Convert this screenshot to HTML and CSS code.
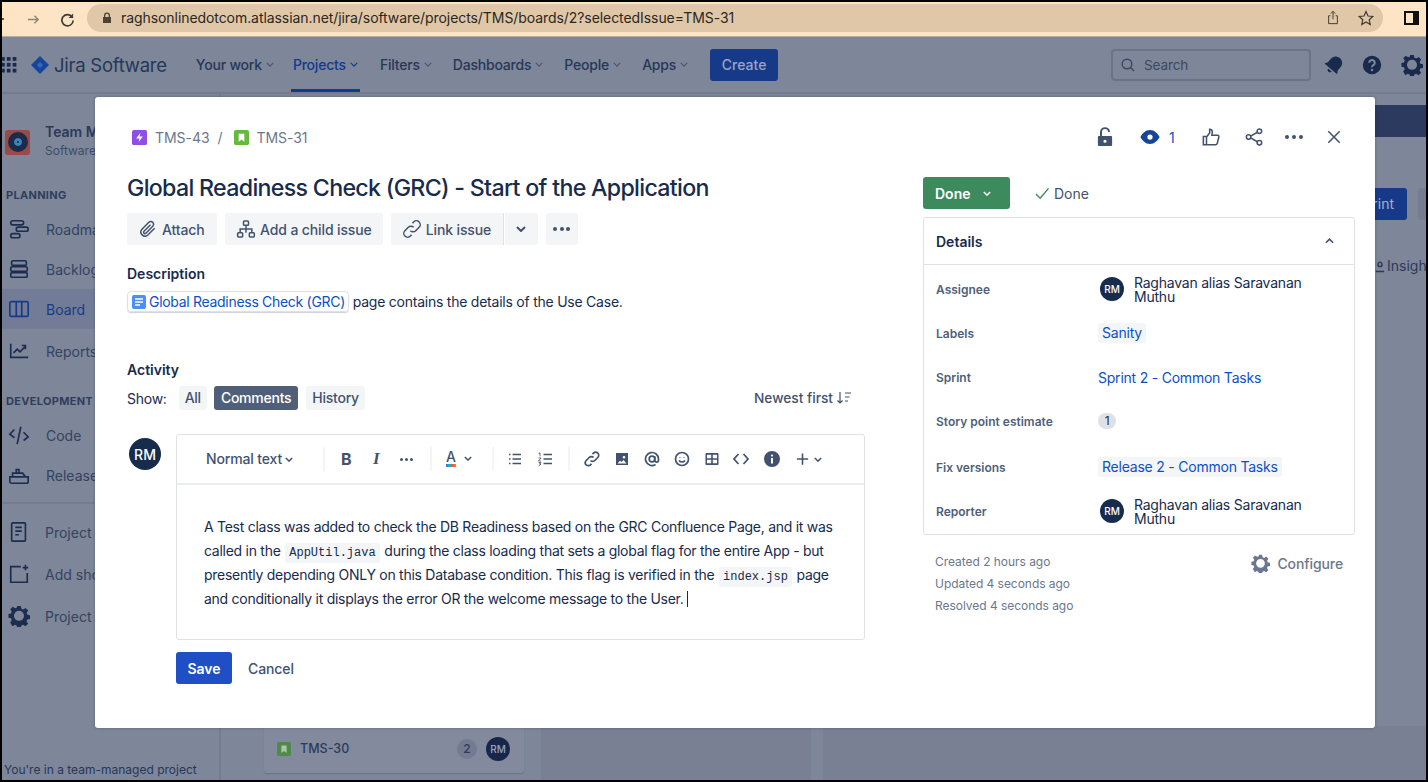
FILE: index.html
```html
<!DOCTYPE html>
<html lang="en">
<head>
<meta charset="utf-8">
<title>TMS-31</title>
<link rel="stylesheet" href="styles.css">
</head>
<body>
<div class="frame">
  <header class="chrome">
    <span class="back"></span>
    <svg class="ci fwd" viewBox="0 0 16 16"><path d="M2 8h11M9 4l4 4-4 4"/></svg>
    <svg class="ci reload" viewBox="0 0 16 16"><path d="M13 5.500A6 6 0 1 0 14 9"/><path class="fill" d="M14 1.500v5h-5z"/></svg>
    <div class="omni">
      <svg class="lock" viewBox="0 0 10 12"><path d="M2 5V3.500a3 3 0 0 1 6 0V5h1v6H1V5zm1.300 0h3.400V3.500a1.700 1.700 0 0 0-3.400 0z"/></svg>
      <span class="url">raghsonlinedotcom.atlassian.net/jira/software/projects/TMS/boards/2?selectedIssue=TMS-31</span>
      <svg class="ci share" viewBox="0 0 16 18"><path d="M5 7H3v9h10V7h-2M8 11V2M5.500 4.500 8 2l2.500 2.500"/></svg>
      <svg class="ci star" viewBox="0 0 16 16"><path d="m8 1.500 2 4.500 4.800.5-3.600 3.200 1 4.800L8 12l-4.200 2.500 1-4.800L1.200 6.500 6 6z"/></svg>
    </div>
    <span class="sidepanel"></span>
  </header>

  <nav class="topnav">
    <svg class="apps" viewBox="0 0 16 16"><g><rect x="0" y="1" width="3.500" height="3.500"/><rect x="5.500" y="1" width="3.500" height="3.500"/><rect x="11" y="1" width="3.500" height="3.500"/><rect x="0" y="6.500" width="3.500" height="3.500"/><rect x="5.500" y="6.500" width="3.500" height="3.500"/><rect x="11" y="6.500" width="3.500" height="3.500"/><rect x="0" y="12" width="3.500" height="3.500"/><rect x="5.500" y="12" width="3.500" height="3.500"/><rect x="11" y="12" width="3.500" height="3.500"/></g></svg>
    <svg class="jira-logo" viewBox="0 0 18 18"><path d="M9 0l9 9-9 9-9-9z"/><path class="hole" d="M9 6l3 3-3 3-3-3z"/></svg>
    <span class="brand">Jira Software</span>
    <ul class="menu">
      <li>Your work <svg class="chev" viewBox="0 0 10 6"><path d="M1 1l4 4 4-4"/></svg></li>
      <li class="active">Projects <svg class="chev" viewBox="0 0 10 6"><path d="M1 1l4 4 4-4"/></svg></li>
      <li>Filters <svg class="chev" viewBox="0 0 10 6"><path d="M1 1l4 4 4-4"/></svg></li>
      <li>Dashboards <svg class="chev" viewBox="0 0 10 6"><path d="M1 1l4 4 4-4"/></svg></li>
      <li>People <svg class="chev" viewBox="0 0 10 6"><path d="M1 1l4 4 4-4"/></svg></li>
      <li>Apps <svg class="chev" viewBox="0 0 10 6"><path d="M1 1l4 4 4-4"/></svg></li>
    </ul>
    <span class="create">Create</span>
    <div class="nav-right">
      <div class="search">
        <svg class="ni" viewBox="0 0 16 16"><circle cx="7" cy="7" r="4.800"/><path d="M10.500 10.500 14 14"/></svg>
        <span>Search</span>
      </div>
      <svg class="nav-ico bell" viewBox="0 0 24 24"><g transform="rotate(40 12 12)"><path d="M12 2a7 7 0 0 0-7 7v5l-2 3.500h18L19 14V9a7 7 0 0 0-7-7z"/><path d="M9.500 19a2.500 2.500 0 0 0 5 0z"/></g></svg>
      <svg class="nav-ico help" viewBox="0 0 24 24"><circle cx="12" cy="12" r="10"/><path class="q" d="M9 9.500a3 3 0 1 1 4.500 2.600c-1 .6-1.500 1.100-1.500 2.400"/><circle class="qd" cx="12" cy="17.500" r="1.300"/></svg>
      <svg class="nav-ico gear" viewBox="0 0 24 24"><use href="#gear-shape"/></svg>
    </div>
  </nav>

  <main class="behind">
    <aside class="side">
      <div class="project">
        <span class="proj-ava"><i></i></span>
        <div><b>Team Management</b><small>Software project</small></div>
      </div>
      <h6>PLANNING</h6>
      <a class="side-item"><svg viewBox="0 0 24 24"><rect x="3" y="3" width="14" height="4.500" rx="2.200"/><rect x="9" y="10" width="13" height="4.500" rx="2.200"/><rect x="3" y="17" width="10" height="4.500" rx="2.200"/></svg>Roadmap</a>
      <a class="side-item"><svg viewBox="0 0 24 24"><rect x="4" y="3" width="16" height="5" rx="1.500"/><rect x="3" y="9.500" width="18" height="5" rx="1.500"/><rect x="3" y="16" width="18" height="5" rx="1.500"/></svg>Backlog</a>
      <a class="side-item current"><svg viewBox="0 0 24 24"><rect x="2" y="4" width="20" height="16" rx="1.500"/><path d="M9 4v16M15 4v16"/></svg>Board</a>
      <a class="side-item"><svg viewBox="0 0 24 24"><path d="M3 4v15h19M6 14l4-4 3 3 6-6M15 6h4v4"/></svg>Reports</a>
      <h6 class="dev">DEVELOPMENT</h6>
      <a class="side-item"><svg viewBox="0 0 24 24"><path d="M7 6l-5 5 5 4M17 9l5 5-5 4M14 3l-4 19"/></svg>Code</a>
      <a class="side-item"><svg viewBox="0 0 24 24"><path d="M2 14h20v5a2 2 0 0 1-2 2H4a2 2 0 0 1-2-2zM5 14v-4h11l3 4M9 10V6h3v4"/></svg>Releases</a>
      <hr>
      <a class="side-item low"><svg viewBox="0 0 24 24"><rect x="4" y="2" width="15" height="20" rx="1"/><path d="M8 7h7M8 11h7M8 15h4"/></svg>Project pages</a>
      <a class="side-item low"><svg viewBox="0 0 24 24"><path d="M14 4H3v17h18V11M19 2v6M16 5h6"/></svg>Add shortcut</a>
      <a class="side-item low"><svg class="solid" viewBox="0 0 24 24"><use href="#gear-shape"/></svg>Project settings</a>
      <p class="team-note">You're in a team-managed project</p>
    </aside>
    <section class="board">
      <div class="sprint-strip"></div>
      <div class="board-actions">
        <span class="complete">Complete sprint</span>
        <span class="board-more"></span>
      </div>
      <div class="insights"><svg viewBox="0 0 12 14"><path d="M1 13h10M6 2a2.500 2.500 0 1 1 0 5 2.500 2.500 0 0 1 0-5z"/></svg>Insights</div>
      <div class="columns">
        <div class="col col-one">
          <div class="card">
            <svg class="story-mini" viewBox="0 0 16 16"><rect width="16" height="16" rx="2" fill="#4f8a4a"/><path fill="#a9c6a8" d="M5 4h6v8.500l-3-2.300-3 2.300z"/></svg>
            <span class="card-key">TMS-30</span>
            <span class="card-pts">2</span><span class="card-ava">RM</span>
          </div>
        </div>
        <div class="col col-two"></div>
        <div class="col col-gap"></div>
        <div class="col col-two rest"></div>
      </div>
    </section>
  </main>

  <div class="modal">
    <div class="col-left">
      <div class="crumbs">
        <svg class="type" viewBox="0 0 16 16"><rect width="16" height="16" rx="2" fill="#904ee2"/><path fill="#fff" d="M9 3 4.500 9H8l-1 4 4.500-6H8z"/></svg>
        <span>TMS-43</span><span class="slash">/</span>
        <svg class="type" viewBox="0 0 16 16"><rect width="16" height="16" rx="2" fill="#63ba3c"/><path fill="#fff" d="M5 4h6v8.500l-3-2.300-3 2.300z"/></svg>
        <span>TMS-31</span>
      </div>
      <h1>Global Readiness Check (GRC) - Start of the Application</h1>
      <div class="actions">
        <span class="btn attach"><svg class="bi" viewBox="0 0 24 24"><path d="M20 11l-8.500 8.500a5 5 0 0 1-7-7L13 4a3.300 3.300 0 0 1 4.700 4.700L9.500 17a1.600 1.600 0 0 1-2.300-2.300L15 7"/></svg>Attach</span>
        <span class="btn"><svg class="bi" viewBox="0 0 24 24"><rect x="9" y="2.500" width="6" height="5" rx="1"/><rect x="2" y="16.500" width="6" height="5" rx="1"/><rect x="16" y="16.500" width="6" height="5" rx="1"/><path d="M12 7.500V12M5 16.500V12h14v4.500M12 12v4.500"/></svg>Add a child issue</span>
        <span class="btn-group">
          <span class="btn joined"><svg class="bi" viewBox="0 0 24 24"><path d="M10 14a4.500 4.500 0 0 0 6.500 0l4-4a4.500 4.500 0 0 0-6.500-6.500l-1.500 1.500M14 10a4.500 4.500 0 0 0-6.500 0l-4 4a4.500 4.500 0 0 0 6.500 6.500l1.500-1.500"/></svg>Link issue</span>
          <span class="btn joined-end"><svg class="chev-b" viewBox="0 0 10 6"><path d="M1 1l4 4 4-4"/></svg></span>
        </span>
        <span class="btn more"><i></i><i></i><i></i></span>
      </div>
      <h2>Description</h2>
      <p class="desc"><a class="smart"><svg viewBox="0 0 16 16"><rect width="14" height="14" x="1" y="1" rx="2" fill="#4c8efa"/><path stroke="#fff" stroke-width="1.500" d="M4 5h8M4 8h8M4 11h5"/></svg>Global Readiness Check (GRC)</a> page contains the details of the Use Case.</p>
      <h2 class="act-title">Activity</h2>
      <div class="filters">
        <span class="show">Show:</span>
        <span class="pill">All</span>
        <span class="pill on">Comments</span>
        <span class="pill">History</span>
        <span class="newest">Newest first <svg viewBox="0 0 16 16"><path d="M4 2v11M1.500 10.500 4 13l2.500-2.500M9 3h6M9 7h4.500M9 11h3"/></svg></span>
      </div>
      <div class="comment">
        <span class="avatar big">RM</span>
        <div class="comment-body">
          <div class="editor">
            <div class="toolbar">
              <span class="style-pick">Normal text <svg class="chev-t" viewBox="0 0 10 6"><path d="M1 1l4 4 4-4"/></svg></span>
              <span class="sep s1"></span>
              <b class="tb-b">B</b>
              <i class="tb-i">I</i>
              <span class="tb-more"><i></i><i></i><i></i></span>
              <span class="sep s2"></span>
              <span class="tb-color"><span>A</span><svg class="chev-t" viewBox="0 0 10 6"><path d="M1 1l4 4 4-4"/></svg></span>
              <span class="sep s3"></span>
              <svg class="ti" viewBox="0 0 16 16"><path d="M5.500 3.500H14M5.500 8H14M5.500 12.500H14M2 3.500h1.500M2 8h1.500M2 12.500h1.500"/></svg>
              <svg class="ti t2" viewBox="0 0 16 16"><path d="M6.500 3.500H15M6.500 8H15M6.500 12.500H15"/><path class="thin" d="M1.500 2.500 3 1.800v3.500M1.500 7h2.500L1.500 10h2.500M1.500 11.500h2.500L2.500 13h1.500L1.500 15"/></svg>
              <span class="sep s4"></span>
              <svg class="ti t3" viewBox="0 0 16 16"><path d="M6.500 9.500a3 3 0 0 0 4.300 0l3-3A3 3 0 0 0 9.500 2.200L8.500 3.200M9.500 6.500a3 3 0 0 0-4.300 0l-3 3a3 3 0 0 0 4.300 4.300l1-1"/></svg>
              <svg class="ti t4" viewBox="0 0 16 16"><path class="tf" d="M2 2h12v12H2zm8 3a1.300 1.300 0 1 0 0 2.600A1.300 1.300 0 0 0 10 5zM3.500 12.500h9l-3-3.500-2 2-1.500-1.300z"/></svg>
              <svg class="ti t5" viewBox="0 0 16 16"><circle cx="8" cy="8" r="2.800"/><path d="M10.800 5.200v4a1.800 1.800 0 0 0 3.700 0V8A6.500 6.500 0 1 0 11.500 13.500"/></svg>
              <svg class="ti t6" viewBox="0 0 16 16"><circle cx="8" cy="8" r="6.500"/><path d="M5 9.500c1.500 2 4.500 2 6 0"/><path d="M5.800 6v.6M10.200 6v.6"/></svg>
              <svg class="ti t7" viewBox="0 0 16 16"><path class="tf" d="M2.500 2h11a1 1 0 0 1 1 1v10a1 1 0 0 1-1 1h-11a1 1 0 0 1-1-1V3a1 1 0 0 1 1-1zm.5 1.700v3.500h4.200V3.700zm5.800 0v3.500H13V3.700zM3 8.800v3.500h4.200V8.800zm5.800 0v3.500H13V8.800z"/></svg>
              <svg class="ti t8" viewBox="0 0 16 16"><path d="M5.500 3 1 8l4.500 5M10.500 3 15 8l-4.500 5"/></svg>
              <svg class="ti t9" viewBox="0 0 16 16"><path class="tf" d="M8 0a8 8 0 1 1 0 16A8 8 0 0 1 8 0zM7 7v5.500h2V7zm1-3.500a1.100 1.100 0 1 0 0 2.200 1.100 1.100 0 0 0 0-2.200z"/></svg>
              <span class="tb-plus"><svg class="ti" viewBox="0 0 16 16"><path d="M8 2v12M2 8h12"/></svg><svg class="chev-t" viewBox="0 0 10 6"><path d="M1 1l4 4 4-4"/></svg></span>
            </div>
            <div class="editor-text">
              <p>A Test class was added to check the DB Readiness based on the GRC Confluence Page, and it was</p>
              <p>called in the <code>AppUtil.java</code> during the class loading that sets a global flag for the entire App - but</p>
              <p>presently depending ONLY on this Database condition. This flag is verified in the <code>index.jsp</code> page</p>
              <p>and conditionally it displays the error OR the welcome message to the User.<span class="caret"></span></p>
            </div>
          </div>
          <div class="form-btns">
            <span class="save">Save</span>
            <span class="cancel">Cancel</span>
          </div>
        </div>
      </div>
    </div>

    <div class="col-right">
      <div class="top-icons">
        <svg class="ri lock-open" viewBox="0 0 18 22"><path class="tf" d="M2 10h14a1 1 0 0 1 1 1v9a1 1 0 0 1-1 1H2a1 1 0 0 1-1-1v-9a1 1 0 0 1 1-1zm7 4a1.800 1.800 0 1 0 0 3.600A1.800 1.800 0 0 0 9 14z"/><path d="M4.500 10V5.500a4.500 4.500 0 0 1 9 0"/></svg>
        <span class="watch"><svg viewBox="0 0 22 16"><path class="eye" fill-rule="evenodd" d="M11 0c5 0 9 4 11 8-2 4-6 8-11 8S2 12 0 8c2-4 6-8 11-8zm0 5a3 3 0 1 0 0 6 3 3 0 0 0 0-6z"/></svg><span>1</span></span>
        <svg class="ri thumb" viewBox="0 0 20 20"><path d="M1.500 9.500h3.500v9H1.500zM5 10l3.500-4.500V1.500c2 0 3 1.500 3 3.500l-.5 3h6.500c1 0 1.500 1 1.200 2l-1.700 7c-.3 1-1 1.500-2 1.500H5"/></svg>
        <svg class="ri share2" viewBox="0 0 20 20"><circle cx="4" cy="10" r="2.500"/><circle cx="16" cy="3.500" r="2.500"/><circle cx="16" cy="16.500" r="2.500"/><path d="M6.200 9l7.600-4.300M6.200 11l7.600 4.300"/></svg>
        <span class="dots"><i></i><i></i><i></i></span>
        <svg class="ri closex" viewBox="0 0 16 16"><path d="M1.500 1.500l13 13M14.500 1.500l-13 13"/></svg>
      </div>
      <div class="status-row">
        <span class="status">Done <svg viewBox="0 0 10 6"><path d="M1 1l4 4 4-4"/></svg></span>
        <span class="resolution"><svg viewBox="0 0 16 14"><path d="M1.500 7.500 6 12 15 1.500"/></svg>Done</span>
      </div>
      <div class="details">
        <div class="details-head"><span>Details</span><svg viewBox="0 0 10 6"><path d="M1 5l4-4 4 4"/></svg></div>
        <div class="rows">
          <div class="row"><label>Assignee</label><div class="val person"><span class="avatar">RM</span><span class="name">Raghavan alias Saravanan Muthu</span></div></div>
          <div class="row"><label>Labels</label><div class="val"><a class="tag">Sanity</a></div></div>
          <div class="row"><label>Sprint</label><div class="val"><a class="link">Sprint 2 - Common Tasks</a></div></div>
          <div class="row"><label>Story point estimate</label><div class="val"><span class="points">1</span></div></div>
          <div class="row r-fix"><label>Fix versions</label><div class="val"><a class="tag">Release 2 - Common Tasks</a></div></div>
          <div class="row"><label>Reporter</label><div class="val person"><span class="avatar">RM</span><span class="name">Raghavan alias Saravanan Muthu</span></div></div>
        </div>
      </div>
      <div class="meta">
        <div class="dates"><p>Created 2 hours ago</p><p>Updated 4 seconds ago</p><p>Resolved 4 seconds ago</p></div>
        <span class="configure"><svg viewBox="0 0 24 24"><use href="#gear-shape"/></svg>Configure</span>
      </div>
    </div>
  </div>
</div>
<svg class="defs" width="0" height="0"><defs><path id="gear-shape" fill-rule="evenodd" d="M10 1h4l.6 3 2 .9 2.600-1.700 2.800 2.800-1.700 2.600.9 2 2.800.6v4l-3 .6-.8 2 1.700 2.600-2.800 2.800-2.600-1.700-2 .8-.5 3h-4l-.6-3-2-.8-2.600 1.700L2.400 19l1.700-2.600-.8-2L.5 13.800v-4l2.800-.6.8-2L2.400 4.600l2.800-2.800L7.800 3.500l2-.8zM12 6.300a5.500 5.500 0 1 0 0 11 5.500 5.500 0 0 0 0-11z"/></defs></svg>
</body>
</html>
```

FILE: styles.css
```css
* { box-sizing: border-box; }
html, body { margin: 0; padding: 0; height: 100%; }
body { background: #000; font-family: Inter, "Noto Sans", "Liberation Sans", sans-serif; color: #172b4d; overflow: hidden; }
p, h1, h2, h6, ul { margin: 0; padding: 0; }
.defs { position: absolute; }

.frame { position: relative; width: 1428px; height: 782px; border: 2px solid #000; overflow: hidden; background: #7e8699; display: flex; flex-direction: column; }

/* browser bar */
.chrome { height: 35px; flex: none; background: #fde4c5; border-bottom: 1px solid #b9ae9b; display: flex; align-items: center; position: relative; padding-left: 24px; }
.back { position: absolute; left: 0; top: 16px; width: 2px; height: 2px; background: #57534d; }
.ci { fill: none; stroke: #3d3a36; stroke-width: 1.500; }
.ci .fill { fill: #3d3a36; stroke: none; }
.fwd { width: 15px; height: 15px; stroke: #8d8577; margin-right: 19px; flex: none; }
.reload { width: 15px; height: 15px; stroke-width: 1.800; margin-right: 12px; flex: none; }
.omni { flex: none; width: 1296px; height: 28px; border-radius: 14px; background: #dfc7a8; display: flex; align-items: center; padding: 0 9px 0 15px; margin-top: -3px; }
.lock { width: 10px; height: 12px; fill: #4b4337; margin-right: 9px; flex: none; }
.url { font-size: 14px; color: #2b2721; flex: 1; letter-spacing: -0.070px; white-space: nowrap; }
.share { width: 14px; height: 17px; margin-right: 18px; stroke-width: 1.100; flex: none; }
.star { width: 16px; height: 16px; stroke-width: 1.200; flex: none; }
.sidepanel { width: 15px; height: 14px; margin-left: 21px; margin-top: -3px; border: 2px solid #111; border-right-width: 6px; background: #fde4c5; flex: none; }

/* nav */
.topnav { height: 57px; flex: none; background: #7e8699; border-bottom: 2px solid #737b8f; display: flex; align-items: center; color: #243352; }
.apps { width: 17px; height: 17px; fill: #172b4d; margin-left: -1px; flex: none; }
.jira-logo { width: 18px; height: 18px; margin-left: 13px; flex: none; fill: #17459c; }
.jira-logo .hole { fill: #3a6bb8; }
.brand { font-size: 18.500px; margin-left: 5px; color: #253858; font-weight: 400; letter-spacing: -0.250px; white-space: nowrap; }
.menu { list-style: none; display: flex; gap: 21px; margin-left: 29px; font-size: 14px; font-weight: 500; color: #253858; height: 55px; letter-spacing: -.2px; }
.menu li { display: flex; align-items: center; gap: 4px; position: relative; white-space: nowrap; }
.menu li:first-child { margin-right: -2px; }
.menu li.active { color: #123a8c; margin-right: 1px; }
.menu li.active::after { content: ""; position: absolute; left: -2px; right: -2px; bottom: 0; height: 3px; background: #123a8c; }
.chev { width: 8px; height: 5px; fill: none; stroke: #4a566f; stroke-width: 1.500; }
.active .chev { stroke: #123a8c; }
.create { margin-left: 22px; background: #173a88; color: #98a5c4; font-size: 14px; font-weight: 500; height: 32px; width: 68px; display: flex; align-items: center; justify-content: center; border-radius: 3px; flex: none; }
.nav-right { margin-left: auto; display: flex; align-items: center; width: 315px; position: relative; height: 32px; }
.search { width: 200px; height: 32px; border: 2px solid #6a7489; border-radius: 4px; display: flex; align-items: center; padding-left: 7px; gap: 8px; color: #3a4863; font-size: 13.500px; letter-spacing: -.1px; }
.ni { width: 16px; height: 16px; fill: none; stroke: #3a4863; stroke-width: 1.400; }
.nav-ico { width: 24px; height: 24px; fill: #1a2a4c; flex: none; }
.bell { margin-left: 12px; width: 22px; height: 22px; }
.help { margin-left: 16px; width: 22px; height: 22px; }
.gear { margin-left: 18px; width: 22px; height: 22px; }
.q { fill: none; stroke: #7e8699; stroke-width: 2.200; }
.qd { fill: #7e8699; }

/* behind modal */
.behind { flex: 1; display: flex; min-height: 0; }
.side { width: 219px; flex: none; border-right: 2px solid #747c90; padding-top: 33px; position: relative; color: #2a3a5a; }
.project { display: flex; gap: 15px; padding-left: 3px; height: 30px; align-items: center; white-space: nowrap; }
.proj-ava { width: 25px; height: 25px; border-radius: 3px; background: #9a4b45; display: flex; align-items: center; justify-content: center; flex: none; }
.proj-ava i { width: 20px; height: 20px; border-radius: 50%; background: #1d2a4a; border: 6px solid #1d2a4a; box-shadow: inset 0 0 0 3px #3a87b5; }
.project b { display: block; font-size: 14px; font-weight: 600; line-height: 18px; }
.project small { display: block; font-size: 12px; line-height: 20px; color: #3e4c68; }
h6 { font-size: 11px; font-weight: 700; color: #2f3e5c; letter-spacing: .3px; padding-left: 4px; margin: 31px 0 7px; line-height: 14px; }
h6.dev { margin: 23px 0 7px; }
.side-item { display: flex; align-items: center; gap: 16px; height: 40px; padding-left: 6px; font-size: 14px; color: #34435f; white-space: nowrap; }
.side-item svg { width: 22px; height: 22px; flex: none; fill: none; stroke: #1d2d4f; stroke-width: 1.800; }
.side-item svg.solid { fill: #1d2d4f; stroke: none; }
.side-item.current { background: #737c96; color: #173a88; margin-bottom: 2px; }
.side-item.current svg { stroke: #173a88; }
.side hr { border: 0; border-top: 2px solid #747c90; margin: 7px 0 7px; }
.side-item.low { height: 42px; gap: 15px; }
.team-note { position: absolute; left: 2px; bottom: 3px; font-size: 12px; color: #27365a; white-space: nowrap; }

.board { flex: 1; min-width: 0; display: flex; flex-direction: column; }
.sprint-strip { margin: 11px 0 0 auto; width: 100px; height: 32px; background: #2b3a5e; flex: none; }
.board-actions { display: flex; justify-content: flex-end; margin-top: 51px; flex: none; }
.complete { width: 110px; height: 32px; background: #173a88; color: #a3aec8; border-radius: 3px; font-size: 14px; white-space: nowrap; overflow: hidden; direction: rtl; line-height: 32px; padding-right: 13px; }
.board-more { width: 8px; height: 32px; margin-left: 11px; background: #767d91; border-radius: 3px 0 0 3px; }
.insights { margin: 36px 0 0 1154px; height: 20px; line-height: 20px; font-size: 14px; color: #2c3b5c; white-space: nowrap; display: flex; align-items: center; gap: 2px; flex: none; }
.insights svg { width: 10px; height: 13px; fill: none; stroke: #2c3b5c; stroke-width: 1.800; flex: none; }
.columns { margin-top: auto; height: 54px; display: flex; flex: none; }
.col { height: 100%; }
.col-one { width: 320px; padding-left: 43px; }
.col-two { width: 270px; background: #798094; }
.col-two.rest { flex: 1; width: auto; }
.col-gap { width: 12px; }
.card { margin-bottom: 5px; width: 260px; height: 47px; border-radius: 0 0 3px 3px; background: #838a9d; box-shadow: 0 1px 1px #6b7387; display: flex; align-items: center; padding: 0 14px 2px 13px; color: #2c3b5c; font-size: 12.500px; font-weight: 500; }
.story-mini { width: 14px; height: 14px; margin-right: 9px; flex: none; }
.card-key { flex: 1; }
.card-pts { width: 20px; height: 20px; border-radius: 10px; background: #727b92; text-align: center; font-size: 12px; line-height: 20px; margin-right: 9px; }
.card-ava { width: 24px; height: 24px; border-radius: 50%; background: #17264a; color: #97a3bd; font-size: 10px; text-align: center; line-height: 24px; letter-spacing: 0; }

/* modal */
.modal { position: absolute; left: 93px; top: 95px; width: 1280px; height: 631px; background: #fff; border-radius: 3px; display: flex; box-shadow: 0 0 3px rgba(23,43,77,.4); }
.col-left { width: 828px; flex: none; padding: 30px 0 0 32px; }
.col-right { flex: 1; padding: 0 20px 0 0; }

.crumbs { display: flex; align-items: center; font-size: 14px; color: #6b778c; height: 20px; margin-left: 5px; letter-spacing: -.05px; }
.type { width: 15px; height: 15px; margin-right: 8px; }
.slash { margin: 0 11px 0 8px; }
h1 { font-size: 23.200px; font-weight: 500; letter-spacing: -.69px; line-height: 30px; margin-top: 26px; white-space: nowrap; color: #172b4d; }
.actions { display: flex; gap: 8px; margin-top: 10px; }
.btn { display: inline-flex; align-items: center; height: 32px; padding: 0 11px; background: #f4f5f7; border-radius: 3px; font-size: 14px; font-weight: 500; color: #42526e; white-space: nowrap; gap: 4px; letter-spacing: -.12px; }
.attach { width: 90px; }
.bi { width: 20px; height: 20px; fill: none; stroke: #42526e; stroke-width: 1.800; }
.btn-group { display: flex; gap: 1px; }
.joined { border-radius: 3px 0 0 3px; border-right: 1px solid #dfe1e6; width: 113px; }
.joined-end { border-radius: 0 3px 3px 0; width: 33px; justify-content: center; padding: 0; }
.chev-b { width: 10px; height: 6px; fill: none; stroke: #42526e; stroke-width: 2; }
.more { width: 32px; justify-content: center; padding: 0; gap: 2.500px; }
.more i, .dots i { width: 4px; height: 4px; border-radius: 50%; background: #42526e; display: block; }
h2 { font-size: 14px; font-weight: 600; color: #172b4d; line-height: 20px; margin-top: 19px; }
.desc { font-size: 14px; line-height: 24px; margin-top: 6px; color: #172b4d; white-space: nowrap; letter-spacing: -.235px; }
.smart { display: inline-block; color: #0b50c9; border: 1px solid #dfe1e6; box-shadow: 0 1px 1px rgba(9,30,66,.2); border-radius: 4px; height: 21px; padding: 0 3px; line-height: 19px; letter-spacing: -.3px; }
.smart svg { width: 16px; height: 16px; margin-right: 2px; vertical-align: -3px; }
.act-title { margin-top: 46px; }
.filters { display: flex; align-items: center; height: 24px; margin-top: 6px; font-size: 14px; width: 725px; color: #172b4d; letter-spacing: -.25px; }
.show { margin-right: 12px; }
.pill { background: #f4f5f7; color: #42526e; height: 24px; padding: 0 6px; line-height: 24px; border-radius: 3px; margin-right: 7px; font-weight: 500; }
.pill.on { background: #505f79; color: #fff; padding: 0 7px; margin-right: 8px; }
.newest { margin-left: auto; color: #42526e; display: flex; align-items: center; gap: 3px; font-weight: 500; font-size: 13.700px; letter-spacing: 0; }
.newest svg { width: 16px; height: 16px; fill: none; stroke: #42526e; stroke-width: 1.200; }

.comment { display: flex; margin-top: 24px; }
.avatar { flex: none; width: 24px; height: 24px; border-radius: 50%; background: #172b4d; color: #fff; font-size: 10px; font-weight: 500; display: flex; align-items: center; justify-content: center; letter-spacing: 0; }
.avatar.big { width: 32px; height: 32px; font-size: 14px; margin: 4px 15px 0 2px; }
.comment-body { width: 689px; }
.editor { border: 1px solid #dfe1e6; border-radius: 3px; height: 206px; }
.toolbar { height: 50px; border-bottom: 2px solid #ebecf0; position: relative; color: #42526e; }
.toolbar > * { position: absolute; }
.style-pick { left: 29px; top: 15px; font-size: 14px; font-weight: 500; white-space: nowrap; line-height: 18px; display: flex; align-items: center; gap: 3px; letter-spacing: -.15px; }
.chev-t { width: 8px; height: 5px; fill: none; stroke: #42526e; stroke-width: 1.800; }
.sep { top: 12px; width: 2px; height: 24px; background: #f4f5f7; }
.s1 { left: 146px; } .s2 { left: 253px; } .s3 { left: 315px; } .s4 { left: 391px; }
.tb-b { left: 164px; top: 14px; font-size: 16px; font-weight: 700; line-height: 20px; }
.tb-i { left: 196px; top: 14px; font-size: 17px; line-height: 20px; font-family: "Liberation Serif", serif; font-weight: 700; }
.tb-more { left: 223px; top: 23px; display: flex; gap: 2px; }
.tb-more i { width: 3px; height: 3px; border-radius: 50%; background: #42526e; display: block; }
.tb-color { left: 269px; top: 14px; display: flex; align-items: center; gap: 8px; font-size: 14px; font-weight: 500; line-height: 18px; }
.tb-color span { border-bottom: 3px solid; border-image: linear-gradient(90deg,#6554c0,#00b8d9,#ff5630,#ff991f) 1; line-height: 15px; display: block; }
.ti { width: 16px; height: 16px; fill: none; stroke: #42526e; stroke-width: 1.700; left: 330px; top: 16px; }
.ti .tf { fill: #42526e; stroke: none; }
.ti .thin { stroke-width: .8; }
.t2 { left: 360px; }
.t3 { left: 407px; }
.t4 { left: 437px; }
.t5 { left: 467px; }
.t6 { left: 497px; }
.t7 { left: 527px; }
.t8 { left: 556px; }
.t9 { left: 587px; }
.tb-plus { left: 618px; top: 16px; display: flex; align-items: center; gap: 4px; }
.tb-plus .ti { width: 15px; }
.editor-text { padding: 30px 20px 0 27px; font-size: 14px; line-height: 24px; color: #172b4d; white-space: nowrap; letter-spacing: -.27px; }
code { font-family: "Liberation Mono", "DejaVu Sans Mono", monospace; font-size: 12px; line-height: 1; letter-spacing: 0; background: #f4f5f7; padding: 3px 4px; border-radius: 3px; margin: 0 1px; color: #172b4d; }
.caret { display: inline-block; width: 1px; height: 16px; background: #172b4d; margin-left: 3px; vertical-align: -3px; }
.form-btns { display: flex; align-items: center; margin-top: 12px; }
.save { width: 56px; height: 32px; background: #1f4fc4; color: #fff; border-radius: 3px; font-size: 14px; font-weight: 600; display: flex; align-items: center; justify-content: center; }
.cancel { margin-left: 16px; font-size: 14px; font-weight: 500; color: #42526e; letter-spacing: -.1px; }

.top-icons { height: 80px; position: relative; }
.top-icons > * { position: absolute; }
.ri { fill: none; stroke: #42526e; stroke-width: 1.700; }
.ri .tf { fill: #42526e; stroke: none; }
.lock-open { left: 174px; top: 30px; width: 16px; height: 20px; stroke-width: 2.200; }
.watch { left: 217px; top: 30px; display: flex; align-items: center; gap: 9px; color: #0b4fc0; font-size: 14px; height: 20px; }
.watch svg { width: 20px; height: 14px; fill: #17459c; }
.thumb { left: 279px; top: 31px; width: 18px; height: 18px; }
.share2 { left: 322px; top: 31px; width: 18px; height: 18px; }
.dots { left: 362px; top: 38px; display: flex; gap: 3px; }
.closex { left: 404px; top: 33px; width: 14px; height: 14px; stroke-width: 1.800; }
.status-row { display: flex; align-items: center; }
.status { width: 87px; height: 32px; background: #3d8a5d; color: #fff; border-radius: 3px; font-size: 14px; font-weight: 600; display: flex; align-items: center; padding-left: 12px; gap: 13px; }
.status svg { width: 8px; height: 5px; fill: none; stroke: #fff; stroke-width: 1.800; }
.resolution { display: flex; align-items: center; margin-left: 24px; font-size: 14px; color: #42526e; gap: 4px; }
.resolution svg { width: 16px; height: 13px; fill: none; stroke: #3d8a5d; stroke-width: 1.500; }

.details { margin-top: 8px; width: 432px; height: 318px; border: 1px solid #dfe1e6; border-radius: 3px; }
.details-head { height: 47px; border-bottom: 1px solid #dfe1e6; display: flex; align-items: center; justify-content: space-between; padding: 0 20px 0 12px; font-size: 14px; font-weight: 600; color: #172b4d; }
.details-head svg { width: 9px; height: 6px; fill: none; stroke: #42526e; stroke-width: 1.800; }
.rows { padding-top: 2px; }
.row { display: flex; align-items: center; height: 44px; }
.r-fix { margin-top: 2px; }
.row label { width: 174px; flex: none; padding-left: 12px; font-size: 12px; font-weight: 600; color: #505f79; }
.val { font-size: 14px; color: #172b4d; display: flex; align-items: center; letter-spacing: -.22px; }
.person { gap: 10px; margin-left: 2px; }
.name { width: 200px; line-height: 14px; padding-top: 2px; }
.tag { background: #f4f5f7; color: #0b50c9; padding: 0 4px; height: 20px; line-height: 20px; border-radius: 3px; }
.link { color: #0b50c9; }
.points { background: #dfe1e6; color: #172b4d; font-size: 12px; width: 18px; height: 16px; border-radius: 8px; text-align: center; line-height: 16px; }
.meta { display: flex; justify-content: space-between; width: 432px; padding: 16px 12px 0 12px; }
.dates p { font-size: 12px; line-height: 22px; color: #6b778c; letter-spacing: -.04px; }
.configure { display: flex; align-items: center; gap: 7px; font-size: 14px; font-weight: 500; color: #6b778c; height: 30px; margin-top: -3px; letter-spacing: -.1px; }
.configure svg { width: 19px; height: 19px; fill: #6b778c; }
```
